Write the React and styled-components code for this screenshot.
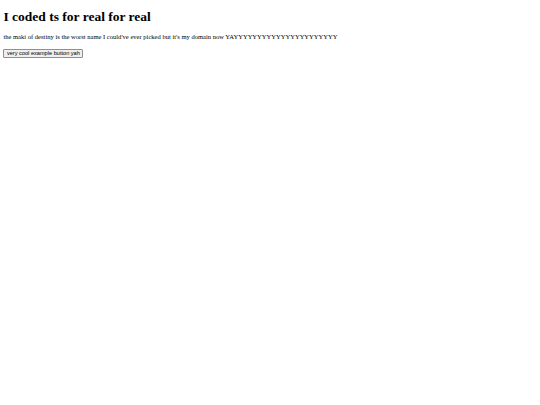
import React from 'react';
import styled, { createGlobalStyle } from 'styled-components';

const GlobalStyle = createGlobalStyle`
  html, body {
    background: #ffffff;
  }
  body {
    margin: 0;
    font-family: 'Liberation Serif', 'Times New Roman', serif;
    color: #000000;
  }
`;

const Page = styled.main`
  display: flex;
  flex-direction: column;
  align-items: flex-start;
  padding: 8.6px 3.4px 0;
`;

const Title = styled.h1`
  font-size: 13.5px;
  line-height: 15px;
  font-weight: bold;
  margin: 0 0 9.4px;
`;

const Blurb = styled.p`
  font-size: 6.55px;
  line-height: 7.6px;
  margin: 0 0 8.4px;
`;

const Button = styled.button`
  font-family: 'Liberation Sans', Arial, sans-serif;
  font-size: 5.625px;
  line-height: 6px;
  color: #000000;
  background: #efefef;
  border: 1px solid #8f8f8f;
  border-radius: 1px;
  padding: 0.5px 2.5px;
  margin: 0;
  cursor: pointer;
`;

function App() {
  return (
    <Page>
      <GlobalStyle />
      <Title>I coded ts for real for real</Title>
      <Blurb>
        the maki of destiny is the worst name I could've ever picked but it's my domain now
        YAYYYYYYYYYYYYYYYYYYYYYY
      </Blurb>
      <Button>very cool example button yah</Button>
    </Page>
  );
}

export default App;
